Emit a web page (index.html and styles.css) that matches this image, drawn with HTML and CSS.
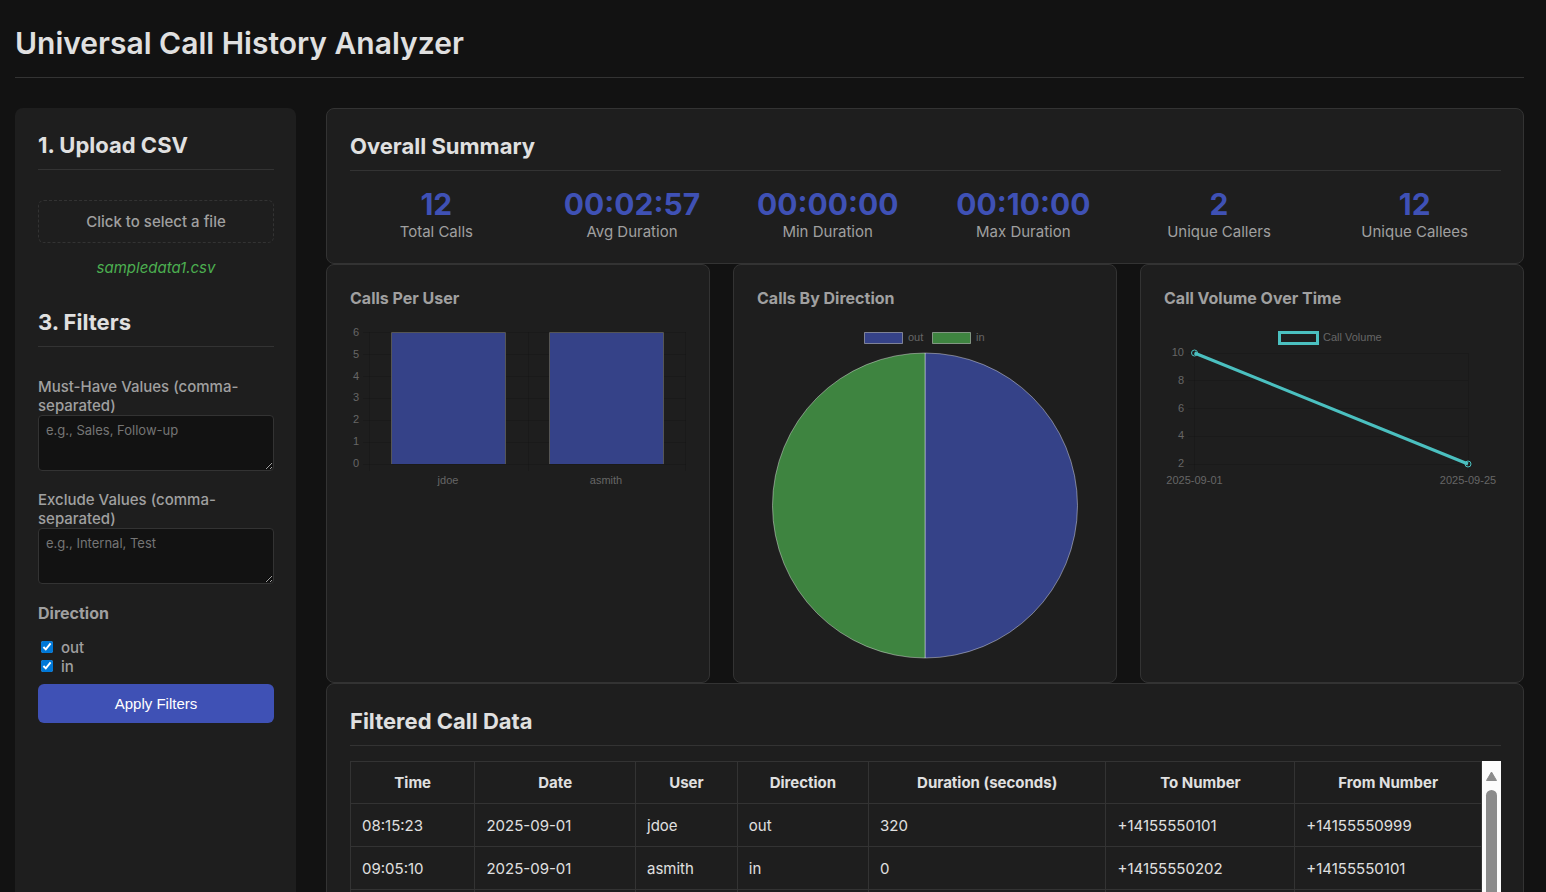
FILE: index.html
```html
<!DOCTYPE html>
<html lang="en">
<head>
<meta charset="utf-8">
<title>Universal Call History Analyzer</title>
<link rel="stylesheet" href="styles.css">
</head>
<body>
<header class="header"><h1>Universal Call History Analyzer</h1></header>
<div class="layout">
  <aside class="sidebar">
    <h2>1. Upload CSV</h2>
    <label class="file-picker" for="csv">Click to select a file</label>
    <input class="file-input" type="file" id="csv" accept=".csv">
    <p class="file-name">sampledata1.csv</p>
    <h2>3. Filters</h2>
    <div class="field">
      <label for="must">Must-Have Values (comma-separated)</label>
      <textarea id="must" placeholder="e.g., Sales, Follow-up"></textarea>
    </div>
    <div class="field">
      <label for="exclude">Exclude Values (comma-separated)</label>
      <textarea id="exclude" placeholder="e.g., Internal, Test"></textarea>
    </div>
    <h3>Direction</h3>
    <div class="checks">
      <label><input type="checkbox" checked>out</label>
      <label><input type="checkbox" checked>in</label>
    </div>
    <button class="apply" type="button">Apply Filters</button>
  </aside>
  <main class="main">
    <section class="card">
      <h2>Overall Summary</h2>
      <div class="stats">
        <div class="stat"><strong>12</strong><span>Total Calls</span></div>
        <div class="stat"><strong>00:02:57</strong><span>Avg Duration</span></div>
        <div class="stat"><strong>00:00:00</strong><span>Min Duration</span></div>
        <div class="stat"><strong>00:10:00</strong><span>Max Duration</span></div>
        <div class="stat"><strong>2</strong><span>Unique Callers</span></div>
        <div class="stat"><strong>12</strong><span>Unique Callees</span></div>
      </div>
    </section>
    <div class="charts">
      <section class="card">
        <h3>Calls Per User</h3>
        <svg class="chart" viewBox="0 0 337 169">
          <path class="grid" d="M13 9.5H336M13 31.5H336M13 53.5H336M13 75.5H336M13 97.5H336M13 119.5H336M13 141.5H336M19.5 9V148M178.5 9V148M335.5 9V148"/>
          <path class="blue" d="M42 10h113v131H42zM200 10h113v131H200z"/>
          <path class="edge" d="M41.5 141V9.5H155.5V141M199.5 141V9.5H313.5V141"/>
          <g class="end"><text x="9" y="13">6</text><text x="9" y="35">5</text><text x="9" y="57">4</text><text x="9" y="78">3</text><text x="9" y="100">2</text><text x="9" y="122">1</text><text x="9" y="144">0</text></g>
          <g class="mid"><text x="98" y="161">jdoe</text><text x="256" y="161">asmith</text></g>
        </svg>
      </section>
      <section class="card">
        <h3>Calls By Direction</h3>
        <svg class="chart" viewBox="0 0 337 337">
          <path class="blue slice" d="M107.5 9.5h38v11h-38z"/><text x="151" y="18">out</text>
          <path class="green slice" d="M175.5 9.5h38v11h-38z"/><text x="219" y="18">in</text>
          <path class="blue slice" d="M168 30A152.5 152.5 0 0 1 168 335Z"/>
          <path class="green slice" d="M168 335A152.5 152.5 0 0 1 168 30Z"/>
        </svg>
      </section>
      <section class="card">
        <h3>Call Volume Over Time</h3>
        <svg class="chart" viewBox="0 0 337 169">
          <path class="grid" d="M24 30.5H304M24 57.5H304M24 85.5H304M24 113.5H304M24 141.5H304M30.5 30V148M304.5 30V148"/>
          <path class="teal thick" d="M115.5 9.5h38v11h-38zM30.5 30L304 141"/>
          <g class="teal"><circle cx="30.5" cy="30" r="3"/><circle cx="304" cy="141" r="3"/></g>
          <text x="159" y="18">Call Volume</text>
          <g class="end"><text x="20" y="33">10</text><text x="20" y="61">8</text><text x="20" y="89">6</text><text x="20" y="116">4</text><text x="20" y="144">2</text></g>
          <g class="mid"><text x="30.5" y="161">2025-09-01</text><text x="304" y="161">2025-09-25</text></g>
        </svg>
      </section>
    </div>
    <section class="card data">
      <h2>Filtered Call Data</h2>
      <div class="table-area">
        <table>
          <colgroup><col class="c-time"><col class="c-date"><col class="c-user"><col class="c-dir"><col class="c-dur"><col class="c-to"><col></colgroup>
          <thead><tr><th>Time</th><th>Date</th><th>User</th><th>Direction</th><th>Duration (seconds)</th><th>To Number</th><th>From Number</th></tr></thead>
          <tbody>
            <tr><td>08:15:23</td><td>2025-09-01</td><td>jdoe</td><td>out</td><td>320</td><td>+14155550101</td><td>+14155550999</td></tr>
            <tr><td>09:05:10</td><td>2025-09-01</td><td>asmith</td><td>in</td><td>0</td><td>+14155550202</td><td>+14155550101</td></tr>
            <tr><td></td><td></td><td></td><td></td><td></td><td></td><td></td></tr>
          </tbody>
        </table>
        <div class="scrollbar" aria-hidden="true">
          <svg class="arrow" viewBox="0 0 11 10"><path d="M5.5 1L10.5 9.5H.5z" stroke-linejoin="round"/></svg>
          <div class="thumb"></div>
        </div>
      </div>
    </section>
  </main>
</div>
</body>
</html>
```
FILE: styles.css
```css
* { box-sizing: border-box; }
body {
  display: flex;
  flex-direction: column;
  height: 100vh;
  margin: 0;
  padding: 22px 22px 0 15px;
  overflow: hidden;
  background: #121212;
  color: #e0e0e0;
  font: 15px/19px Inter, sans-serif;
}
h1, h2, h3, p { margin: 0; }
.header { padding-bottom: 13px; border-bottom: 1px solid #333; margin-bottom: 30px; }
h1 { font-size: 30px; line-height: 42px; font-weight: 600; }
h2 { font-size: 22px; line-height: 28px; font-weight: 700; padding-bottom: 10px; border-bottom: 1px solid #333; }
h3 { font-size: 16px; line-height: 20px; font-weight: 700; color: #a0a0a0; }
.layout { display: grid; grid-template-columns: 281px minmax(0, 1fr); gap: 30px; flex: 1; min-height: 0; }
.sidebar { padding: 23px 22px 22px 23px; background: #1e1e1e; border-radius: 8px 8px 0 0; color: #a0a0a0; }
.sidebar h2 { color: #e0e0e0; margin-bottom: 30px; }
.file-picker {
  display: block;
  padding: 11px;
  border: 1px dashed #333;
  border-radius: 6px;
  text-align: center;
  font-weight: 500;
  cursor: pointer;
}
.file-input { position: absolute; width: 1px; height: 1px; opacity: 0; }
.file-name { margin: 15px 0 30px; line-height: 20px; text-align: center; font-style: italic; color: #4caf50; }
.field { margin-bottom: 19px; }
.field label { display: block; font-weight: 500; }
textarea {
  display: block;
  width: 100%;
  height: 56px;
  padding: 7px;
  border: 1px solid #333;
  border-radius: 4px;
  background: #121212;
  color: #e0e0e0;
  font: 13px/15px Inter, sans-serif;
  resize: vertical;
}
textarea::placeholder { color: #757575; }
.checks { display: flex; flex-direction: column; margin: 15px 0 8px; font-weight: 500; }
.checks label { display: flex; align-items: center; gap: 8px; }
.checks input { width: 12px; height: 12px; margin: 0 0 1px 3px; accent-color: #0078d7; }
.apply {
  width: 100%;
  padding: 10px;
  border: 0;
  border-radius: 6px;
  background: #3f51b5;
  color: #fff;
  font: 15px/19px "Liberation Sans", Arial, sans-serif;
}
.main { display: flex; flex-direction: column; min-height: 0; }
.card { flex: none; padding: 23px 22px 22px 23px; border: 1px solid #333; border-radius: 8px; background: #1e1e1e; }
.stats { display: grid; grid-template-columns: repeat(6, minmax(0, 1fr)); gap: 23px; margin-top: 15px; text-align: center; }
.stat { display: flex; flex-direction: column; color: #a0a0a0; }
.stat strong { font-size: 30px; line-height: 36px; font-weight: 700; color: #3f51b5; }
.charts { display: grid; grid-template-columns: repeat(3, minmax(0, 1fr)); gap: 23px; flex: none; }
.chart { display: block; width: 100%; margin-top: 15px; font: 11px "Liberation Sans", Arial, sans-serif; fill: #666; }
.grid { fill: none; stroke: #000; stroke-opacity: .1; }
.blue { fill: #354288; }
.green { fill: #3e8440; }
.edge { fill: none; stroke: #555; }
.slice { stroke: #fff; stroke-opacity: .4; }
.teal { fill: none; stroke: #4bc0c0; }
.thick { stroke-width: 3; }
.end { text-anchor: end; }
.mid { text-anchor: middle; }
.data h2 { margin-bottom: 15px; }
.table-area { display: flex; }
table { flex: 1; border-collapse: collapse; table-layout: fixed; }
.c-time { width: 11%; }
.c-date { width: 14.2%; }
.c-user { width: 9%; }
.c-dir { width: 11.6%; }
.c-dur { width: 21%; }
.c-to { width: 16.7%; }
th, td { height: 43px; padding: 0 11px; border: 1px solid #333; }
th { height: 42px; font-weight: 700; }
.scrollbar { display: flex; flex-direction: column; align-items: center; width: 19px; padding-top: 10px; background: #fcfcfc; }
.arrow { width: 11px; height: 10px; fill: #8b8b8b; stroke: #8b8b8b; }
.thumb { flex: 1; width: 11px; margin-top: 9px; border-radius: 6px 6px 0 0; background: #8b8b8b; }
```
